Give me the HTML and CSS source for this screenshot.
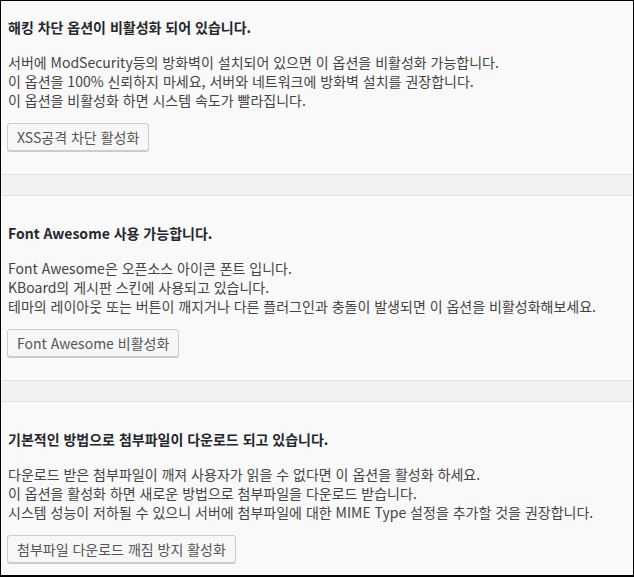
FILE: index.html
```html
<!DOCTYPE html>
<html lang="ko">
<head>
<meta charset="utf-8">
<title>KBoard 설정</title>
<link rel="stylesheet" href="styles.css">
</head>
<body>
<div class="frame">
  <section class="panel panel-first">
    <h3 class="panel-title">해킹 차단 옵션이 비활성화 되어 있습니다.</h3>
    <p class="panel-text">서버에 ModSecurity등의 방화벽이 설치되어 있으면 이 옵션을 비활성화 가능합니다.<br>이 옵션을 100% 신뢰하지 마세요, 서버와 네트워크에 방화벽 설치를 권장합니다.<br>이 옵션을 비활성화 하면 시스템 속도가 빨라집니다.</p>
    <button class="btn" type="button">XSS공격 차단 활성화</button>
  </section>
  <div class="divider"></div>
  <section class="panel">
    <h3 class="panel-title">Font Awesome 사용 가능합니다.</h3>
    <p class="panel-text">Font Awesome은 오픈소스 아이콘 폰트 입니다.<br>KBoard의 게시판 스킨에 사용되고 있습니다.<br>테마의 레이아웃 또는 버튼이 깨지거나 다른 플러그인과 충돌이 발생되면 이 옵션을 비활성화해보세요.</p>
    <button class="btn" type="button">Font Awesome 비활성화</button>
  </section>
  <div class="divider"></div>
  <section class="panel">
    <h3 class="panel-title">기본적인 방법으로 첨부파일이 다운로드 되고 있습니다.</h3>
    <p class="panel-text">다운로드 받은 첨부파일이 깨져 사용자가 읽을 수 없다면 이 옵션을 활성화 하세요.<br>이 옵션을 활성화 하면 새로운 방법으로 첨부파일을 다운로드 받습니다.<br>시스템 성능이 저하될 수 있으니 서버에 첨부파일에 대한 MIME Type 설정을 추가할 것을 권장합니다.</p>
    <button class="btn" type="button">첨부파일 다운로드 깨짐 방지 활성화</button>
  </section>
</div>
</body>
</html>
```
FILE: styles.css
```css
html, body {
  margin: 0;
  padding: 0;
  background: #f9f9f9;
}
body {
  font-family: "Noto Sans CJK KR", "Noto Sans", sans-serif;
  font-size: 14px;
  color: #444;
}
.frame {
  box-sizing: border-box;
  height: 577px;
  overflow: hidden;
  border: 1px solid #000;
  border-bottom-width: 2px;
  background: #f9f9f9;
}
.panel {
  padding: 27px 6px 23px 6px;
  display: flex;
  flex-direction: column;
  align-items: flex-start;
}
.panel-first {
  padding-top: 16px;
}
.panel-title {
  margin: 0;
  font-size: 14px;
  line-height: 20px;
  font-weight: bold;
  color: #23282d;
  padding-left: 1px;
}
.panel-text {
  margin: 16px 0 13px 0;
  line-height: 19px;
  color: #444;
  padding-left: 1px;
}
.btn {
  font-family: inherit;
  font-size: 14px;
  color: #555;
  height: 28px;
  line-height: 26px;
  padding: 0 9px;
  border: 1px solid #ccc;
  border-radius: 3px;
  background: #f7f7f7;
  box-shadow: 0 1px 0 #ccc;
  cursor: pointer;
}
.divider {
  height: 20px;
  background: #f1f1f1;
  border-top: 1px solid #e3e3e3;
  border-bottom: 1px solid #e3e3e3;
}
```
